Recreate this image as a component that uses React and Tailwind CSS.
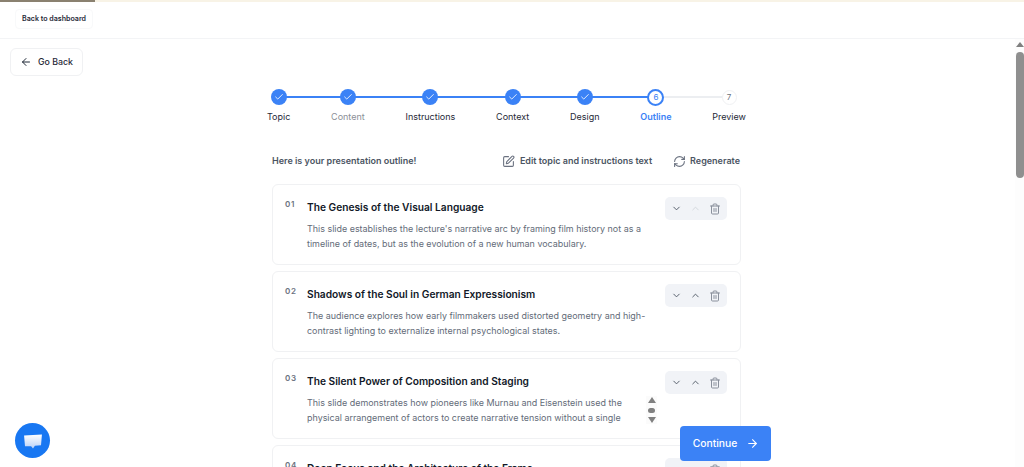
import React from 'react';
import { ArrowLeft, ArrowRight, Check, ChevronDown, ChevronUp, RefreshCw, SquarePen, Trash2 } from 'lucide-react';

const steps = [
  { label: 'Topic', done: true, labelClass: 'text-[#1f2937]' },
  { label: 'Content', done: true, labelClass: 'text-[#8b8f97]' },
  { label: 'Instructions', done: true, labelClass: 'text-[#1f2937]' },
  { label: 'Context', done: true, labelClass: 'text-[#1f2937]' },
  { label: 'Design', done: true, labelClass: 'text-[#1f2937]' },
  { label: 'Outline', num: 6, active: true, labelClass: 'text-[#3b82f6] font-semibold' },
  { label: 'Preview', num: 7, labelClass: 'text-[#1f2937]' },
];

const slides = [
  {
    num: '01',
    title: 'The Genesis of the Visual Language',
    lines: ["This slide establishes the lecture's narrative arc by framing film history not as a", 'timeline of dates, but as the evolution of a new human vocabulary.'],
    upDisabled: true,
  },
  {
    num: '02',
    title: 'Shadows of the Soul in German Expressionism',
    lines: ['The audience explores how early filmmakers used distorted geometry and high-', 'contrast lighting to externalize internal psychological states.'],
  },
  {
    num: '03',
    title: 'The Silent Power of Composition and Staging',
    lines: ['This slide demonstrates how pioneers like Murnau and Eisenstein used the', 'physical arrangement of actors to create narrative tension without a single'],
    scroller: true,
  },
  {
    num: '04',
    title: 'Deep Focus and the Architecture of the Frame',
    lines: [],
  },
];

function Step({ step }) {
  return (
    <div className="relative z-10 flex flex-col items-center gap-[6px]">
      <div className="h-[16px] flex items-center justify-center">
        {step.done && (
          <div className="w-[16px] h-[16px] rounded-full bg-[#3b82f6] flex items-center justify-center">
            <Check size={10} strokeWidth={2} className="text-white" />
          </div>
        )}
        {step.active && (
          <div className="w-[17px] h-[17px] rounded-full bg-white border-2 border-[#3b82f6] flex items-center justify-center text-[8px] text-[#3b82f6]">
            {step.num}
          </div>
        )}
        {!step.done && !step.active && (
          <div className="w-[15px] h-[15px] rounded-full bg-white border border-[#f0f1f3] flex items-center justify-center text-[8px] text-[#6b7280]">
            {step.num}
          </div>
        )}
      </div>
      <span className={`text-[9px] leading-[12px] ${step.labelClass}`}>{step.label}</span>
    </div>
  );
}

function SlideCard({ slide }) {
  return (
    <div className="relative h-[81px] shrink-0 rounded-[6px] border border-[#f0f1f3] bg-white pl-[12px] pr-[13px] pt-[12px] flex">
      <span className="w-[22px] shrink-0 pt-[2px] text-[8px] leading-[10px] font-semibold tracking-[0.8px] text-[#6b7280]">{slide.num}</span>
      <div className="flex-1 min-w-0 pt-[3px]">
        <h3 className="text-[10.2px] leading-[14px] font-semibold text-[#111827] whitespace-nowrap">{slide.title}</h3>
        <div className="mt-[7px] text-[8.95px] leading-[15px] text-[#636b78] whitespace-nowrap">
          {slide.lines.map((line) => (
            <p key={line}>{line}</p>
          ))}
        </div>
      </div>
      <div className="shrink-0 h-[23px] w-[62px] rounded-[5px] bg-[#f1f3f7] flex items-center justify-between pl-[6px] pr-[6px]">
        <ChevronDown size={11} className="text-[#4b5563]" />
        <ChevronUp size={11} className={slide.upDisabled ? 'text-[#d1d5db]' : 'text-[#4b5563]'} />
        <Trash2 size={12} className="text-[#8a909c]" />
      </div>
      {slide.scroller && (
        <div className="absolute left-[373px] top-[37px] w-[11px] h-[28px] bg-[#fbfbfb] flex flex-col items-center justify-between py-[1px]">
          <div className="w-0 h-0 border-l-[4px] border-r-[4px] border-b-[6px] border-l-transparent border-r-transparent border-b-[#808080]" />
          <div className="w-[7px] h-[5px] rounded-full bg-[#808080]" />
          <div className="w-0 h-0 border-l-[4px] border-r-[4px] border-t-[6px] border-l-transparent border-r-transparent border-t-[#808080]" />
        </div>
      )}
    </div>
  );
}

export default function App() {
  return (
    <div className="relative h-[467px] overflow-hidden bg-white flex flex-col font-['Inter',sans-serif]">
      {/* loading bar on top */}
      <div className="h-[2px] shrink-0 bg-[#f8f3e6]">
        <div className="h-full w-[95px] bg-[#8a8170]" />
      </div>

      <header className="h-[37px] shrink-0 border-b border-[#f3f4f6] pl-[15px] pt-[7px] flex items-start">
        <button className="h-[20px] w-[78px] pt-[1px] rounded-[4px] border border-[#f8f9fa] bg-white text-[7.1px] font-semibold text-[#1f2937] whitespace-nowrap">
          Back to dashboard
        </button>
      </header>

      <div className="flex-1 min-h-0 flex">
        <main className="flex-1 min-w-0 relative">
          <div className="pl-[10px] pt-[9px] flex">
            <button className="h-[28px] w-[73px] rounded-[6px] border border-[#f0f1f3] bg-white flex items-center justify-center gap-[6px] text-[8.8px] font-medium text-[#1f2937]">
              <ArrowLeft size={12} />
              Go Back
            </button>
          </div>

          <div className="ml-[267px] w-[479px] mt-[13px]">
            <div className="relative flex justify-between items-start">
              <div className="absolute left-[11px] right-[17px] top-[7px] h-[2px] bg-[#eceef1]" />
              <div className="absolute left-[11px] top-[7px] h-[2px] w-[378px] bg-[#3b82f6]" />
              {steps.map((step) => (
                <Step key={step.label} step={step} />
              ))}
            </div>

            <div className="ml-[5px] mr-[6px] mt-[31px] flex items-center text-[9px] leading-[14px] font-semibold text-[#4b5563]">
              <span className="flex-1">Here is your presentation outline!</span>
              <span className="flex items-center gap-[5px]">
                <SquarePen size={13} className="text-[#6b7280]" />
                Edit topic and instructions text
              </span>
              <span className="flex items-center gap-[4px] ml-[21px]">
                <RefreshCw size={13} className="text-[#6b7280]" />
                Regenerate
              </span>
            </div>

            <div className="mx-[5px] mt-[16px] flex flex-col gap-[6px]">
              {slides.map((slide) => (
                <SlideCard key={slide.num} slide={slide} />
              ))}
            </div>
          </div>
        </main>

        {/* window scrollbar */}
        <div className="w-[9px] shrink-0 bg-[#fdfdfd] flex flex-col items-center pt-[3px]">
          <div className="w-0 h-0 border-l-[4px] border-r-[4px] border-b-[5px] border-l-transparent border-r-transparent border-b-[#808080]" />
          <div className="mt-[5px] w-[8px] h-[126px] shrink-0 rounded-full bg-[#8f8f8f]" />
        </div>
      </div>

      <button className="absolute left-[680px] top-[426px] h-[35px] w-[91px] rounded-[4px] bg-[#3b82f6] flex items-center justify-center gap-[9px] pl-[1px] text-[10.3px] font-medium text-white">
        Continue
        <ArrowRight size={13} />
      </button>

      <div className="absolute left-[15px] top-[423px] w-[35px] h-[35px] rounded-full bg-[#1877f2] flex items-center justify-center">
        <svg width="20" height="16" viewBox="0 0 21 17" className="mt-[2px]">
          <defs>
            <linearGradient id="bubble" x1="0" y1="0" x2="0" y2="1">
              <stop offset="0" stopColor="#ffffff" />
              <stop offset="1" stopColor="#b9d0f7" />
            </linearGradient>
          </defs>
          <path d="M1 1.5 L20 0.5 L19 12 L12.5 12.5 L10.5 15.5 L8.5 13 L2 13 Z" fill="url(#bubble)" />
        </svg>
      </div>
    </div>
  );
}
